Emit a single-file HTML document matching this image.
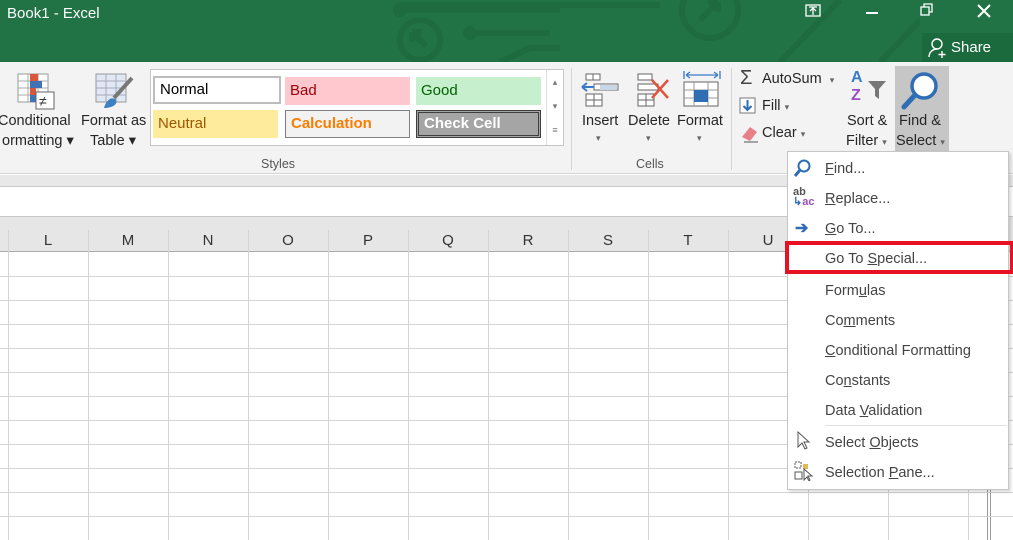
<!DOCTYPE html>
<html><head><meta charset="utf-8"><style>
*{margin:0;padding:0;box-sizing:border-box}
body{width:1013px;height:540px;overflow:hidden;position:relative;background:#fff;font-family:"Liberation Sans",sans-serif;color:#262626}
.abs{position:absolute}
.t{position:absolute;font-size:14.5px;white-space:nowrap}
.tb{background:#217346}
.gridv{position:absolute;top:230px;width:1px;height:310px;background:#d4d4d4}
.gridh{position:absolute;left:0;width:1013px;height:1px;background:#d4d4d4}
.ch{position:absolute;top:232px;font-size:15px;color:#333;width:80px;text-align:center}
.mi{position:absolute;left:825px;font-size:14.5px;color:#444}
u{text-decoration:underline}
.sty{position:absolute;height:28px;font-size:15px;padding:5px 0 0 5px}
</style></head><body>
<!-- title bar -->
<div class="abs tb" style="left:0;top:0;width:1013px;height:62px"></div>
<svg class="abs" style="left:360px;top:0" width="560" height="62">
<g stroke="#1d6b3f" stroke-width="6" fill="none">
<circle cx="60" cy="40" r="20"/><path d="M52 32l14 14M52 32h10M52 32v10"/>
<path d="M40 10H200"/><circle cx="40" cy="10" r="4"/>
<path d="M110 33H190"/><circle cx="110" cy="33" r="4"/>
<path d="M140 62 L170 48 H200"/>
<circle cx="350" cy="10" r="28"/><path d="M340 20l18-18M358 2h-10M358 2v10"/>
<path d="M40 5H300"/><path d="M420 62L480 0"/><path d="M520 62L560 20"/>
</g></svg>
<div class="t" style="left:7px;top:5px;color:#fff;font-size:15px">Book1 - Excel</div>
<svg class="abs" style="left:805px;top:4px" width="16" height="14"><rect x="1" y="1" width="14" height="11" fill="none" stroke="#fff" stroke-width="1.3"/><path d="M8 11V4M5 7l3-3 3 3M4 3h8" stroke="#fff" stroke-width="1.3" fill="none"/></svg>
<div class="abs" style="left:866px;top:12px;width:12px;height:2px;background:#fff"></div>
<svg class="abs" style="left:920px;top:3px" width="14" height="14"><rect x="1" y="4" width="8" height="8" fill="none" stroke="#fff" stroke-width="1.3"/><path d="M4 4V1h8v8H9" fill="none" stroke="#fff" stroke-width="1.3"/></svg>
<svg class="abs" style="left:977px;top:4px" width="14" height="14"><path d="M1 1l12 12M13 1L1 13" stroke="#fff" stroke-width="2"/></svg>
<div class="abs" style="left:922px;top:33px;width:91px;height:29px;background:#1b6a3d"></div>
<svg class="abs" style="left:928px;top:37px" width="20" height="22"><circle cx="9" cy="7" r="5" fill="none" stroke="#fff" stroke-width="1.4"/><path d="M1 20c0-5 4-8 8-8" fill="none" stroke="#fff" stroke-width="1.4"/><path d="M14 14v7M10.5 17.5h7" stroke="#fff" stroke-width="1.4"/></svg>
<div class="t" style="left:951px;top:39px;color:#fff;font-size:15px">Share</div>
<!-- ribbon -->
<div class="abs" style="left:0;top:62px;width:1013px;height:112px;background:#f3f3f3;border-bottom:1px solid #d5d5d5"></div>
<div class="abs" style="left:0;top:175px;width:1013px;height:12px;background:#e8e8e8;border-bottom:1px solid #c8c8c8"></div>
<!-- cond formatting icon -->
<svg class="abs" style="left:16px;top:72px" width="40" height="40"><g fill="#fff" stroke="#999"><rect x="2" y="2" width="30" height="28"/></g><path d="M2 9h30M2 16h30M2 23h30M12 2v28M22 2v28" stroke="#aaa"/><rect x="14" y="2" width="8" height="7" fill="#d9573a"/><rect x="14" y="9" width="12" height="7" fill="#3f73b5"/><rect x="14" y="16" width="6" height="7" fill="#d9573a"/><rect x="14" y="23" width="8" height="7" fill="#3f73b5"/><rect x="20" y="20" width="18" height="17" fill="#fff" stroke="#666"/><text x="23" y="34" font-size="14" fill="#333" font-family="Liberation Sans">≠</text></svg>
<div class="t" style="left:-2px;top:113px">Conditional</div>
<div class="t" style="left:2px;top:133px">ormatting ▾</div>
<svg class="abs" style="left:92px;top:72px" width="44" height="40"><rect x="4" y="2" width="30" height="28" fill="#dfe8f3" stroke="#999"/><path d="M4 9h30M4 16h30M4 23h30M14 2v28M24 2v28" stroke="#aab"/><path d="M40 6L22 26" stroke="#777" stroke-width="4"/><path d="M12 36c2-8 8-12 12-8 2 3-2 8-12 8z" fill="#3f7fc4"/></svg>
<div class="t" style="left:81px;top:113px">Format as</div>
<div class="t" style="left:90px;top:133px">Table ▾</div>
<!-- styles gallery -->
<div class="abs" style="left:150px;top:69px;width:414px;height:77px;background:#fff;border:1px solid #c6c6c6"></div>
<div class="abs" style="left:546px;top:70px;width:17px;height:75px;border-left:1px solid #ddd;font-size:9px;color:#777;text-align:center;line-height:24px">▴<br>▾<br>≡</div>
<div class="sty" style="left:153px;top:76px;width:128px;border:2px solid #bdbdbd;padding-top:3px;color:#000;background:#fff">Normal</div>
<div class="sty" style="left:285px;top:77px;width:125px;background:#ffc7ce;color:#9c0006">Bad</div>
<div class="sty" style="left:416px;top:77px;width:125px;background:#c6efce;color:#006100">Good</div>
<div class="sty" style="left:153px;top:110px;width:125px;background:#ffeb9c;color:#9c5700">Neutral</div>
<div class="sty" style="left:285px;top:110px;width:125px;background:#f2f2f2;border:1px solid #7f7f7f;color:#fa7d00;font-weight:bold;padding-top:4px">Calculation</div>
<div class="sty" style="left:416px;top:110px;width:125px;background:#a5a5a5;border:3px double #3f3f3f;color:#fff;font-weight:bold;padding-top:2px">Check Cell</div>
<div class="t" style="left:261px;top:157px;font-size:12.5px;color:#555">Styles</div>
<div class="abs" style="left:571px;top:68px;width:1px;height:102px;background:#d5d5d5"></div>
<div class="abs" style="left:731px;top:68px;width:1px;height:102px;background:#d5d5d5"></div>
<!-- cells icons -->
<svg class="abs" style="left:580px;top:72px" width="40" height="36"><path d="M6 2h14v6H6zM14 12h24v6H14zM6 22h16v12H6zM14 22v12M6 28h16M6 2h7v6" fill="#fff" stroke="#666"/><rect x="20" y="13" width="17" height="5" fill="#c9d6e8"/><path d="M2 15h12M2 15l5-4M2 15l5 4" stroke="#3a7bc8" stroke-width="2" fill="none"/></svg>
<div class="t" style="left:582px;top:113px">Insert</div>
<div class="t" style="left:596px;top:133px;font-size:9px;color:#666">▾</div>
<svg class="abs" style="left:632px;top:72px" width="40" height="36"><path d="M6 2h14v6H6zM6 12h20v6H6zM6 22h16v12H6zM14 22v12M6 28h16" fill="#fff" stroke="#666"/><path d="M20 8l16 18M36 8L20 26" stroke="#e0533d" stroke-width="2.5"/></svg>
<div class="t" style="left:628px;top:113px">Delete</div>
<div class="t" style="left:646px;top:133px;font-size:9px;color:#666">▾</div>
<svg class="abs" style="left:682px;top:70px" width="40" height="40"><path d="M4 5h32M4 5l4-3M4 5l4 3M36 5l-4-3M36 5l-4 3M2 1v8M38 1v8" stroke="#3a7bc8" fill="none" stroke-width="1.3"/><rect x="2" y="12" width="34" height="24" fill="#fff" stroke="#666"/><path d="M2 20h34M2 28h34M12 12v24M26 12v24" stroke="#999"/><rect x="12" y="20" width="14" height="12" fill="#2f6db5"/></svg>
<div class="t" style="left:677px;top:113px">Format</div>
<div class="t" style="left:697px;top:133px;font-size:9px;color:#666">▾</div>
<div class="t" style="left:636px;top:157px;font-size:12.5px;color:#555">Cells</div>
<!-- editing -->
<div class="t" style="left:740px;top:67px;font-size:20px;color:#444">Σ</div>
<div class="t" style="left:762px;top:71px">AutoSum &nbsp;<span style="font-size:9px;color:#666">▾</span></div>
<svg class="abs" style="left:739px;top:97px" width="18" height="18"><rect x="1" y="1" width="15" height="15" fill="#fff" stroke="#777"/><path d="M8.5 3v10M4.5 9l4 4 4-4" stroke="#2f6db5" stroke-width="2" fill="none"/></svg>
<div class="t" style="left:762px;top:98px">Fill <span style="font-size:9px;color:#666">▾</span></div>
<svg class="abs" style="left:739px;top:123px" width="22" height="20"><path d="M3 14l8-10 7 5-7 9z" fill="#e8808a"/><path d="M5 19h14" stroke="#555"/></svg>
<div class="t" style="left:762px;top:125px">Clear <span style="font-size:9px;color:#666">▾</span></div>
<div class="t" style="left:851px;top:69px;font-size:16px;color:#3a7bc8;font-weight:bold">A</div>
<div class="t" style="left:851px;top:87px;font-size:16px;color:#9a4fc0;font-weight:bold">Z</div>
<svg class="abs" style="left:866px;top:79px" width="22" height="22"><path d="M2 2h18l-7 8v10l-4-3v-7z" fill="#777"/></svg>
<div class="t" style="left:847px;top:113px">Sort &amp;</div>
<div class="t" style="left:846px;top:133px">Filter <span style="font-size:9px;color:#666">▾</span></div>
<div class="abs" style="left:895px;top:66px;width:54px;height:86px;background:#c6c6c6"></div>
<svg class="abs" style="left:900px;top:70px" width="42" height="40"><circle cx="24" cy="16" r="12" fill="#fff" stroke="#2f6db5" stroke-width="3.5"/><path d="M15 25L4 37" stroke="#2f6db5" stroke-width="5" stroke-linecap="round"/></svg>
<div class="t" style="left:899px;top:113px">Find &amp;</div>
<div class="t" style="left:896px;top:133px">Select <span style="font-size:9px;color:#666">▾</span></div>
<!-- formula bar -->
<div class="abs" style="left:0;top:188px;width:1013px;height:29px;background:#fff"></div>
<div class="abs" style="left:0;top:216px;width:1013px;height:36px;background:#e6e6e6;border-top:1px solid #c8c8c8;border-bottom:1px solid #ababab"></div>
<!-- grid -->
<div class="gridv" style="left:8px"></div><div class="gridv" style="left:88px"></div><div class="gridv" style="left:168px"></div><div class="gridv" style="left:248px"></div><div class="gridv" style="left:328px"></div><div class="gridv" style="left:408px"></div><div class="gridv" style="left:488px"></div><div class="gridv" style="left:568px"></div><div class="gridv" style="left:648px"></div><div class="gridv" style="left:728px"></div><div class="gridv" style="left:808px"></div><div class="gridv" style="left:888px"></div><div class="gridv" style="left:968px"></div>
<div class="abs" style="left:987px;top:252px;width:4px;height:288px;border-left:1px solid #999;border-right:1px solid #999"></div>
<div class="gridh" style="top:276px"></div><div class="gridh" style="top:300px"></div><div class="gridh" style="top:324px"></div><div class="gridh" style="top:348px"></div><div class="gridh" style="top:372px"></div><div class="gridh" style="top:396px"></div><div class="gridh" style="top:420px"></div><div class="gridh" style="top:444px"></div><div class="gridh" style="top:468px"></div><div class="gridh" style="top:492px"></div><div class="gridh" style="top:516px"></div>
<div class="ch" style="left:8px">L</div><div class="ch" style="left:88px">M</div><div class="ch" style="left:168px">N</div><div class="ch" style="left:248px">O</div><div class="ch" style="left:328px">P</div><div class="ch" style="left:408px">Q</div><div class="ch" style="left:488px">R</div><div class="ch" style="left:568px">S</div><div class="ch" style="left:648px">T</div><div class="ch" style="left:728px">U</div>
<!-- menu -->
<div class="abs" style="left:787px;top:151px;width:222px;height:339px;background:#fff;border:1px solid #c6c6c6;box-shadow:2px 2px 3px rgba(0,0,0,.15)"></div>
<svg class="abs" style="left:793px;top:158px" width="20" height="20"><circle cx="11" cy="8" r="5.5" fill="none" stroke="#2f6db5" stroke-width="2"/><path d="M7 12L2 18" stroke="#2f6db5" stroke-width="3"/></svg>
<div class="mi" style="top:161px"><u>F</u>ind...</div>
<div class="abs" style="left:793px;top:187px;font-size:11px;line-height:10px;color:#555;font-weight:bold">ab<br><span style="color:#2f6db5">↳</span><span style="color:#9a4fc0">ac</span></div>
<div class="mi" style="top:191px"><u>R</u>eplace...</div>
<div class="abs" style="left:795px;top:218px;font-size:16px;color:#2f6db5;font-weight:bold">➔</div>
<div class="mi" style="top:221px"><u>G</u>o To...</div>
<div class="abs" style="left:785px;top:241px;width:229px;height:33px;border:4px solid #e81123"></div>
<div class="mi" style="top:251px">Go To <u>S</u>pecial...</div>
<div class="mi" style="top:283px">Form<u>u</u>las</div>
<div class="mi" style="top:313px">Co<u>m</u>ments</div>
<div class="mi" style="top:343px"><u>C</u>onditional Formatting</div>
<div class="mi" style="top:373px">Co<u>n</u>stants</div>
<div class="mi" style="top:403px">Data <u>V</u>alidation</div>
<div class="abs" style="left:825px;top:425px;width:182px;height:1px;background:#e1e1e1"></div>
<svg class="abs" style="left:796px;top:431px" width="16" height="20"><path d="M2 1v15l4-4 3 6 2-1-3-6h5z" fill="#fff" stroke="#555"/></svg>
<div class="mi" style="top:435px">Select <u>O</u>bjects</div>
<svg class="abs" style="left:794px;top:461px" width="20" height="20"><rect x="1" y="11" width="7" height="7" fill="none" stroke="#555"/><path d="M1 1h6v6H1z" fill="none" stroke="#555" stroke-dasharray="2 1"/><rect x="9" y="3" width="5" height="5" fill="#e5b85a"/><path d="M10 8v11l3-3 2 4 1-1-2-4h4z" fill="#fff" stroke="#555"/></svg>
<div class="mi" style="top:465px">Selection <u>P</u>ane...</div>
</body></html>
